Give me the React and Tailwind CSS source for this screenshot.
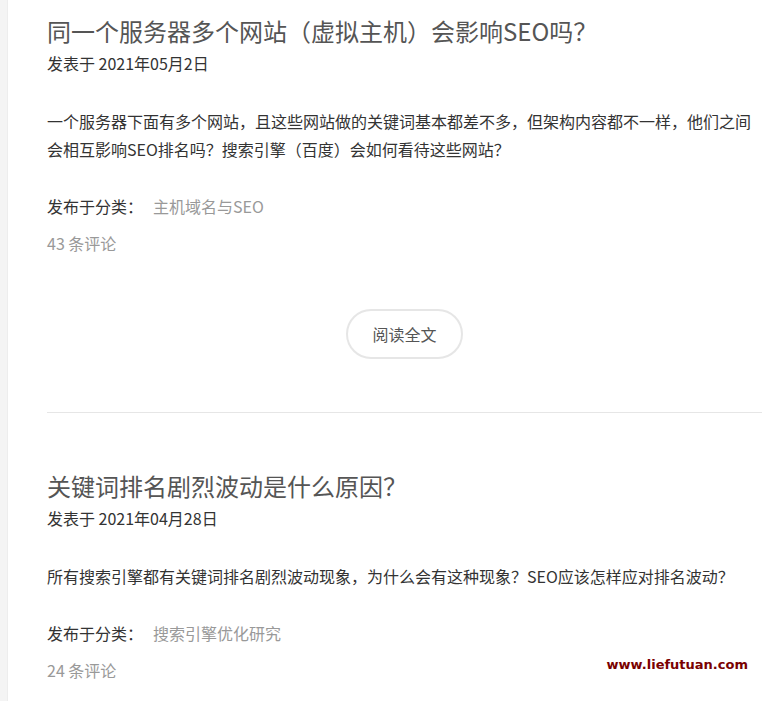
const posts = [
  {
    title: "同一个服务器多个网站（虚拟主机）会影响SEO吗？",
    date: "2021年05月2日",
    excerpt:
      "一个服务器下面有多个网站，且这些网站做的关键词基本都差不多，但架构内容都不一样，他们之间会相互影响SEO排名吗？搜索引擎（百度）会如何看待这些网站？",
    category: "主机域名与SEO",
    comments: 43,
  },
  {
    title: "关键词排名剧烈波动是什么原因？",
    date: "2021年04月28日",
    excerpt:
      "所有搜索引擎都有关键词排名剧烈波动现象，为什么会有这种现象？SEO应该怎样应对排名波动？",
    category: "搜索引擎优化研究",
    comments: 24,
  },
];

const PostItem = ({ post, last }) => {
  return (
    <article className={last ? "pt-[57px]" : "pt-[15px]"}>
      <h2 className="text-[24px] leading-[32px] text-[#555] font-normal">
        {post.title}
      </h2>
      <div className="mt-[2px] text-[16px] leading-[28px] text-[#333]">
        发表于 {post.date}
      </div>

      <p className="mt-[30px] text-[16px] leading-[28px] text-[#333]">
        {post.excerpt}
      </p>

      <div className="mt-[29px] flex text-[16px] leading-[28px]">
        <span className="text-[#333]">发布于分类：</span>
        <a href="#" className="ml-[10px] text-[#999]">
          {post.category}
        </a>
      </div>
      <div className="mt-[9px] text-[16px] leading-[28px] text-[#999]">
        {post.comments} 条评论
      </div>

      {/* last post's button sits below the fold */}
      {!last && (
        <div className="mt-[52px] flex justify-center">
          <button className="w-[117px] h-[50px] rounded-full border-2 border-[#e6e6e6] bg-white text-[16px] text-[#555]">
            阅读全文
          </button>
        </div>
      )}

      {!last && <div className="mt-[53px] h-px bg-[#e6e6e6]" />}
    </article>
  );
};

export default function App() {
  return (
    <div
      className="relative flex h-[701px] w-[779px] overflow-hidden bg-white"
      style={{ fontFamily: '"Noto Sans CJK SC", "Noto Sans", sans-serif' }}
    >
      <div className="w-[8px] shrink-0 bg-[#f4f4f4] border-r border-[#ededed]" />

      <main className="ml-[39px] w-[715px]">
        {posts.map((post, i) => (
          <PostItem
            key={post.title}
            post={post}
            last={i === posts.length - 1}
          />
        ))}
      </main>

      <div
        className="absolute right-[31px] top-[657px] text-[13px] leading-[16px] font-bold text-[#7a0000]"
        style={{ fontFamily: '"DejaVu Sans", sans-serif' }}
      >
        www.liefutuan.com
      </div>
    </div>
  );
}
